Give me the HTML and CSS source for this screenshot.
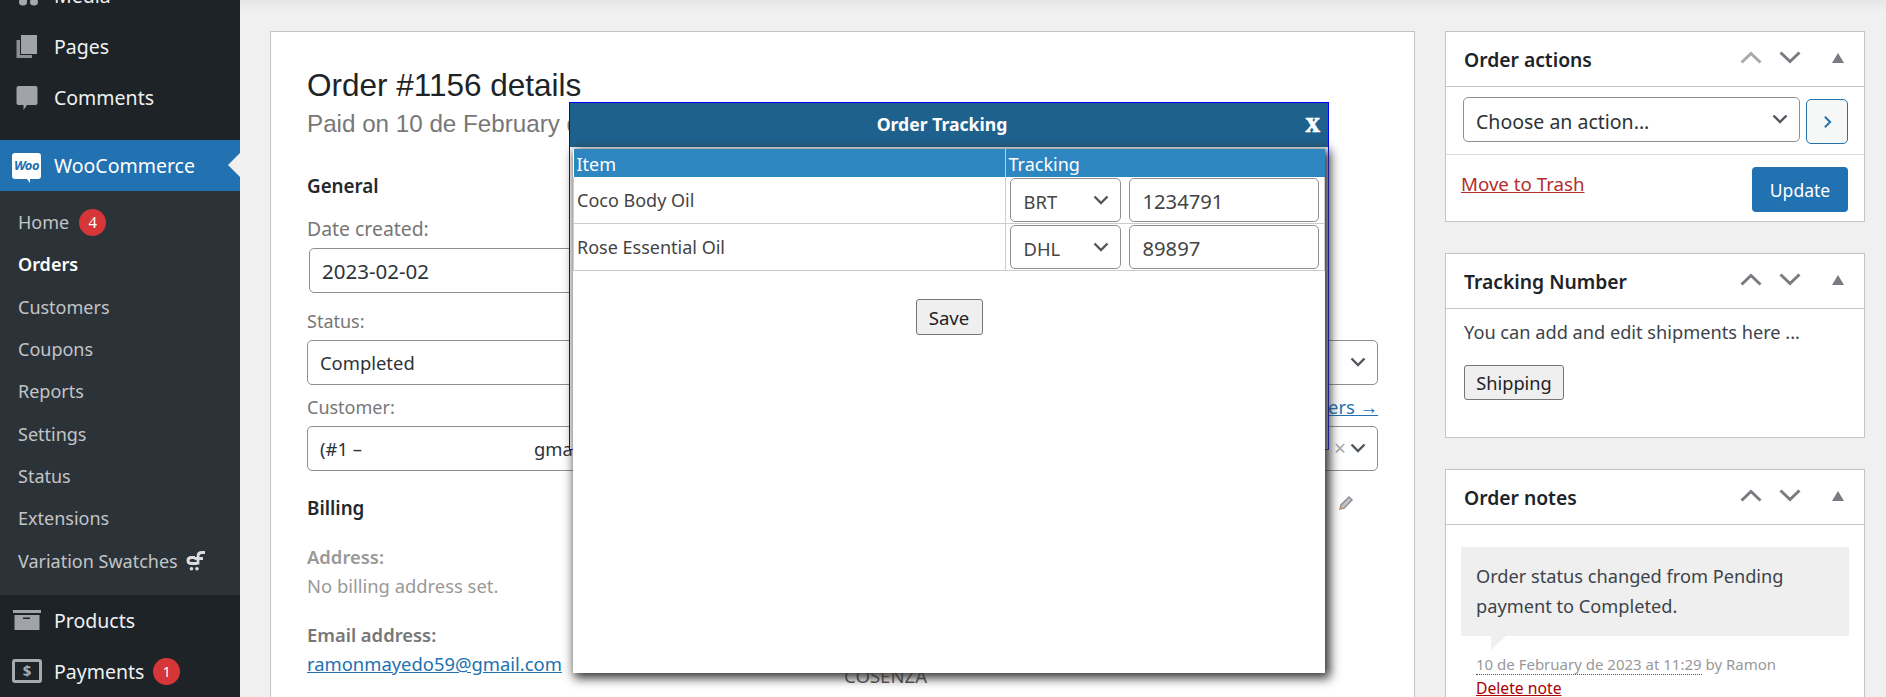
FILE: index.html
```html
<!DOCTYPE html>
<html lang="en">
<head>
    <meta charset="UTF-8">
    <title>Order #1156 details</title>
    <link rel="stylesheet" href="styles.css">
</head>
<body>
    <svg class="sprite" width="0" height="0">
        <symbol id="chev-down" viewBox="0 0 16 10"><path d="M1.5 1.5 8 8l6.5-6.5" fill="none" stroke="currentColor" stroke-width="2.4"/></symbol>
        <symbol id="chev-up" viewBox="0 0 22 13"><path d="M1.5 11.5 11 2.5l9.5 9" fill="none" stroke="currentColor" stroke-width="3"/></symbol>
        <symbol id="chev-low" viewBox="0 0 22 13"><path d="M1.5 1.5 11 10.5l9.5-9" fill="none" stroke="currentColor" stroke-width="3"/></symbol>
        <symbol id="tri-up" viewBox="0 0 12 10"><path d="M6 0 12 10H0z" fill="currentColor"/></symbol>
    </svg>

    <div class="page">
        <nav class="sidebar">
            <ul class="menu">
                <li class="menu-item">
                    <svg class="menu-icon" viewBox="0 0 30 24"><ellipse cx="11" cy="18" rx="4" ry="3.5" fill="#a7aaad"/><ellipse cx="22" cy="18" rx="4" ry="3.5" fill="#a7aaad"/><path d="M13 2h11v15h-2V6h-7v12h-2z" fill="#a7aaad"/></svg>
                    Media
                </li>
                <li class="menu-item">
                    <svg class="menu-icon" viewBox="0 0 30 24"><path d="M4.500 5h3.500v15h12v3H4.500z" fill="#8c8f94"/><path d="M9 0h16v19H9z" fill="#a0a4aa"/></svg>
                    Pages
                </li>
                <li class="menu-item">
                    <svg class="menu-icon" viewBox="0 0 30 24"><path d="M6.500 0h17q2 0 2 2v15q0 2-2 2H15l-3.500 5v-5h-5q-2 0-2-2V2q0-2 2-2z" fill="#a0a4aa"/></svg>
                    Comments
                </li>
                <li class="menu-item is-current">
                    <span class="woo-icon">Woo</span>
                    WooCommerce
                </li>
            </ul>
            <ul class="submenu">
                <li>Home <span class="badge badge-serif">4</span></li>
                <li class="is-active">Orders</li>
                <li>Customers</li>
                <li>Coupons</li>
                <li>Reports</li>
                <li>Settings</li>
                <li>Status</li>
                <li>Extensions</li>
                <li>Variation Swatches
                    <svg class="swatch-icon" viewBox="0 0 20 20"><path d="M9 6.500H5.500q-3.500 0-3.500 3t3.500 3H11" fill="none" stroke="#dcdcde" stroke-width="3"/><path d="M19 1.500H16q-4 0-4 4v8M8.500 7.500H17" fill="none" stroke="#dcdcde" stroke-width="2.800"/><circle cx="5.500" cy="17.800" r="1.800" fill="#dcdcde"/><circle cx="11" cy="17.800" r="1.800" fill="#dcdcde"/></svg>
                </li>
            </ul>
            <ul class="menu">
                <li class="menu-item">
                    <svg class="menu-icon" viewBox="0 0 30 24"><path d="M1 2h28v3H1z" fill="#a0a4aa"/><path d="M2.500 7h25v15h-25z" fill="#a0a4aa"/><path d="M11 9.500h7v1.500h-7z" fill="#1d2327"/></svg>
                    Products
                </li>
                <li class="menu-item">
                    <span class="pay-icon">$</span>
                    Payments <span class="badge">1</span>
                </li>
            </ul>
        </nav>

        <main class="content">
            <section class="order-card">
                <h1>Order #1156 details</h1>
                <p class="order-sub">Paid on 10 de February de 2023</p>

                <h3 class="section-title">General</h3>
                <label class="field-label date-label">Date created:</label>
                <input class="date-input" type="text" value="2023-02-02">

                <label class="field-label status-label">Status:</label>
                <div class="select-wrap">
                    <select class="field-select"><option>Completed</option></select>
                    <svg class="chev"><use href="#chev-down"/></svg>
                </div>

                <div class="customer-row">
                    <label class="field-label">Customer:</label>
                    <a href="#" class="link">View other orders →</a>
                </div>
                <div class="select-wrap">
                    <div class="field-select customer-value"><span>(#1 –</span><span class="customer-mail">gmail.com)</span></div>
                    <span class="clear-x">×</span>
                    <svg class="chev"><use href="#chev-down"/></svg>
                </div>

                <div class="address-cols">
                    <div class="billing-col">
                        <h3 class="section-title billing-title">Billing</h3>
                        <p class="muted"><strong>Address:</strong><br>No billing address set.</p>
                        <p class="email"><strong>Email address:</strong><br><a href="#" class="link">ramonmayedo59@gmail.com</a></p>
                    </div>
                    <div class="shipping-col">
                        <svg class="pencil" viewBox="0 0 16 16"><path d="M2 14l1-4 8-8 3 3-8 8z" fill="#c3c4c7" stroke="#8c8f94" stroke-width="1.500"/><path d="M2 14l1-4 3 3z" fill="#c9a98a"/></svg>
                        <p class="shipping-city">COSENZA</p>
                    </div>
                </div>
            </section>

            <aside class="side-col">
                <section class="metabox">
                    <div class="metabox-head">
                        <h2>Order actions</h2>
                        <div class="head-btns">
                            <svg class="head-chev is-faded"><use href="#chev-up"/></svg>
                            <svg class="head-chev"><use href="#chev-low"/></svg>
                            <svg class="head-tri"><use href="#tri-up"/></svg>
                        </div>
                    </div>
                    <div class="action-row">
                        <div class="select-wrap action-select">
                            <select class="field-select"><option>Choose an action...</option></select>
                            <svg class="chev"><use href="#chev-down"/></svg>
                        </div>
                        <button class="go-btn" type="button">
                            <svg viewBox="0 0 10 16" width="9" height="14"><path d="M2 2l6 6-6 6" fill="none" stroke="#2271b1" stroke-width="2.200"/></svg>
                        </button>
                    </div>
                    <div class="update-row">
                        <a href="#" class="trash-link">Move to Trash</a>
                        <button class="update-btn" type="button">Update</button>
                    </div>
                </section>

                <section class="metabox">
                    <div class="metabox-head">
                        <h2>Tracking Number</h2>
                        <div class="head-btns">
                            <svg class="head-chev"><use href="#chev-up"/></svg>
                            <svg class="head-chev"><use href="#chev-low"/></svg>
                            <svg class="head-tri"><use href="#tri-up"/></svg>
                        </div>
                    </div>
                    <div class="tracking-body">
                        <p>You can add and edit shipments here ...</p>
                        <button class="plain-btn shipping-btn" type="button">Shipping</button>
                    </div>
                </section>

                <section class="metabox">
                    <div class="metabox-head">
                        <h2>Order notes</h2>
                        <div class="head-btns">
                            <svg class="head-chev"><use href="#chev-up"/></svg>
                            <svg class="head-chev"><use href="#chev-low"/></svg>
                            <svg class="head-tri"><use href="#tri-up"/></svg>
                        </div>
                    </div>
                    <div class="notes-body">
                        <div class="note-bubble">Order status changed from Pending payment to Completed.</div>
                        <p class="note-meta"><span class="note-date">10 de February de 2023 at 11:29</span> by Ramon</p>
                        <a href="#" class="note-delete">Delete note</a>
                    </div>
                </section>
            </aside>
        </main>
    </div>

    <div class="modal">
        <div class="modal-head">
            <span>Order Tracking</span>
            <span class="modal-close">x</span>
        </div>
        <div class="modal-body">
            <table class="track-table">
                <thead>
                    <tr><th class="col-item">Item</th><th>Tracking</th></tr>
                </thead>
                <tbody>
                    <tr>
                        <td>Coco Body Oil</td>
                        <td>
                            <div class="track-cell">
                                <div class="select-wrap track-select">
                                    <select class="field-select"><option>BRT</option></select>
                                    <svg class="chev"><use href="#chev-down"/></svg>
                                </div>
                                <input class="track-input" type="text" value="1234791">
                            </div>
                        </td>
                    </tr>
                    <tr>
                        <td>Rose Essential Oil</td>
                        <td>
                            <div class="track-cell">
                                <div class="select-wrap track-select">
                                    <select class="field-select"><option>DHL</option></select>
                                    <svg class="chev"><use href="#chev-down"/></svg>
                                </div>
                                <input class="track-input" type="text" value="89897">
                            </div>
                        </td>
                    </tr>
                </tbody>
            </table>
            <div class="save-row">
                <button class="plain-btn" type="button">Save</button>
            </div>
        </div>
    </div>
</body>
</html>
```

FILE: styles.css
```css
/* Base */
html, body {
    margin: 0;
    height: 697px;
    overflow: hidden;
}
body {
    font-family: "Noto Sans", "Open Sans", sans-serif;
    font-size: 18px;
    color: #3c434a;
    background: linear-gradient(#e6e6e6, #f0f0f0 12px);
}
.sprite {
    position: absolute;
}
ul {
    list-style: none;
    margin: 0;
    padding: 0;
}
p {
    margin: 0;
}
a {
    color: #2271b1;
}
.page {
    display: flex;
    height: 697px;
}

/* Sidebar */
.sidebar {
    width: 240px;
    flex-shrink: 0;
    background: #1d2327;
    color: #f0f0f1;
    overflow: hidden;
}
.sidebar > .menu:first-child {
    margin-top: -30px;
}
.menu-item {
    position: relative;
    display: flex;
    align-items: center;
    height: 51px;
    font-size: 19.500px;
    white-space: nowrap;
}
.menu-item:nth-child(3) {
    margin-bottom: 17px;
}
.menu-icon {
    width: 30px;
    height: 24px;
    margin: 0 12px;
    flex-shrink: 0;
}
.is-current {
    background: #2271b1;
    color: #fff;
}
.is-current::after {
    content: "";
    position: absolute;
    right: 0;
    top: 13px;
    border: 12px solid transparent;
    border-left-width: 0;
    border-right-color: #f0f0f1;
}
.woo-icon {
    box-sizing: border-box;
    position: relative;
    width: 29px;
    height: 26px;
    margin: 0 13px 0 12px;
    background: #fff;
    border-radius: 3px;
    color: #2271b1;
    font-size: 13px;
    font-weight: 700;
    font-style: italic;
    line-height: 25px;
    text-align: center;
    letter-spacing: -0.5px;
}
.woo-icon::after {
    content: "";
    position: absolute;
    left: 15px;
    top: 26px;
    border-top: 4px solid #fff;
    border-left: 3px solid transparent;
}
.pay-icon {
    box-sizing: border-box;
    width: 30px;
    height: 24px;
    margin: 0 12px;
    border: 3px solid #a7aaad;
    border-radius: 3px;
    color: #a7aaad;
    font-size: 15px;
    font-weight: 700;
    line-height: 17px;
    text-align: center;
}
.submenu {
    background: #2c3338;
    padding: 10px 0 13px;
    color: #c3c4c7;
}
.submenu li {
    display: flex;
    align-items: center;
    height: 42.300px;
    padding-left: 18px;
    font-size: 18px;
    white-space: nowrap;
}
.submenu .is-active {
    color: #fff;
    font-weight: 600;
}
.badge {
    display: inline-block;
    width: 27px;
    height: 27px;
    margin-left: 9px;
    border-radius: 50%;
    background: #d63638;
    color: #fff;
    font-size: 14px;
    line-height: 27px;
    text-align: center;
}
.badge-serif {
    margin-left: 10px;
    font-family: "Liberation Serif", serif;
    font-size: 17px;
}
.swatch-icon {
    width: 20px;
    height: 20px;
    margin-left: 8px;
}

/* Order card */
.content {
    flex: 1;
    display: flex;
    gap: 30px;
    padding: 31px 21px 0 30px;
    align-items: flex-start;
}
.order-card {
    box-sizing: border-box;
    width: 1145px;
    height: 720px;
    padding: 31px 36px 0 36px;
    background: #fff;
    border: 1px solid #c3c4c7;
}
h1 {
    margin: 0;
    font-family: "Liberation Sans", Arial, sans-serif;
    font-size: 31.500px;
    font-weight: 400;
    line-height: 44px;
    color: #1d2327;
}
.order-sub {
    font-family: "Liberation Sans", Arial, sans-serif;
    font-size: 24.200px;
    line-height: 34px;
    color: #777;
}
.section-title {
    margin: 32px 0 0;
    font-size: 18.800px;
    font-weight: 600;
    line-height: 26px;
    color: #23282d;
}
.field-label {
    display: block;
    margin-top: 18px;
    line-height: 24px;
    color: #777;
}
.date-label {
    font-size: 19.400px;
}
.date-input {
    box-sizing: border-box;
    display: block;
    width: 340px;
    height: 45px;
    margin: 7px 0 0 2px;
    padding: 0 12px;
    border: 1px solid #8c8f94;
    border-radius: 5px;
    font: inherit;
    font-size: 20.500px;
    color: #2c3338;
}
.status-label {
    margin-top: 16px;
    margin-bottom: 7px;
}
.select-wrap {
    position: relative;
}
.field-select {
    box-sizing: border-box;
    display: block;
    width: 100%;
    height: 45px;
    padding: 0 36px 0 12px;
    appearance: none;
    background: #fff;
    border: 1px solid #8c8f94;
    border-radius: 5px;
    font: inherit;
    font-size: 18.400px;
    color: #2c3338;
}
.chev {
    position: absolute;
    right: 12px;
    top: 17px;
    width: 16px;
    height: 10px;
    color: #50575e;
    pointer-events: none;
}
.customer-row {
    display: flex;
    justify-content: space-between;
    align-items: baseline;
    margin-bottom: 7px;
}
.customer-row .field-label {
    margin-top: 10px;
}
.customer-row .link {
    font-size: 18.400px;
}
.customer-value {
    display: flex;
    align-items: center;
}
.customer-mail {
    margin-left: 172px;
}
.clear-x {
    position: absolute;
    right: 32px;
    top: 10px;
    color: #a7aaad;
    font-size: 21px;
    line-height: 24px;
}
.address-cols {
    display: flex;
}
.billing-col {
    width: 537px;
    font-size: 18.400px;
}
.billing-title {
    margin-top: 24px;
}
.muted {
    margin-top: 21px;
    line-height: 29px;
    color: #999;
}
.muted strong, .email strong {
    font-weight: 600;
}
.email {
    margin-top: 20px;
    line-height: 29px;
    color: #777;
}
.shipping-col {
    position: relative;
    flex: 1;
}
.pencil {
    position: absolute;
    right: 24px;
    top: 24px;
    width: 16px;
    height: 16px;
}
.shipping-city {
    margin-top: 192px;
    font-size: 18.600px;
    color: #555;
}

/* Right column */
.side-col {
    width: 420px;
    flex-shrink: 0;
}
.metabox {
    box-sizing: border-box;
    margin-bottom: 31px;
    background: #fff;
    border: 1px solid #c3c4c7;
}
.metabox-head {
    display: flex;
    align-items: center;
    justify-content: space-between;
    height: 54px;
    padding: 0 20px 0 18px;
    border-bottom: 1px solid #c3c4c7;
}
.metabox-head h2 {
    margin: 0;
    font-size: 19.300px;
    font-weight: 600;
    color: #1d2327;
}
.head-btns {
    display: flex;
    align-items: center;
    margin-bottom: 3px;
}
.head-chev {
    width: 22px;
    height: 13px;
    margin-right: 17px;
    color: #787c82;
}
.head-chev.is-faded {
    color: #a7aaad;
}
.head-tri {
    width: 12px;
    height: 10px;
    margin-left: 14px;
    color: #787c82;
}
.action-row {
    display: flex;
    gap: 6px;
    align-items: flex-start;
    padding: 10px 16px 10px 17px;
    border-bottom: 1px solid #dcdcde;
}
.action-select {
    width: 337px;
}
.action-select .field-select {
    padding-top: 3px;
    font-size: 19.500px;
}
.go-btn {
    display: flex;
    align-items: center;
    justify-content: center;
    width: 42px;
    height: 45px;
    padding: 0;
    margin-top: 2px;
    background: #f6f7f7;
    border: 1px solid #2271b1;
    border-radius: 5px;
}
.update-row {
    display: flex;
    justify-content: space-between;
    align-items: center;
    padding: 12px 16px 9px 15px;
}
.trash-link {
    margin-top: -13px;
    font-size: 18.700px;
    color: #b32d2e;
}
.update-btn {
    width: 96px;
    height: 45px;
    background: #2271b1;
    border: 0;
    border-radius: 4px;
    color: #fff;
    font: inherit;
    font-size: 17.500px;
}
.tracking-body {
    height: 117px;
    padding: 11px 18px 0;
    font-size: 18.200px;
}
.plain-btn {
    background: #efefef;
    border: 1px solid #767676;
    border-radius: 3px;
    color: #1d2327;
    font: inherit;
    padding: 0;
}
.shipping-btn {
    display: block;
    width: 100px;
    height: 35px;
    margin-top: 21px;
}
.notes-body {
    padding: 22px 15px 0;
}
.note-bubble {
    position: relative;
    padding: 15px 15px 15px;
    background: #efefef;
    font-size: 18.200px;
    line-height: 29.500px;
}
.note-bubble::after {
    content: "";
    position: absolute;
    left: 30px;
    top: 100%;
    border-top: 14px solid #efefef;
    border-right: 15px solid transparent;
}
.note-meta {
    margin: 16px 0 0 15px;
    font-size: 15px;
    line-height: 24px;
    color: #999;
}
.note-date {
    border-bottom: 1px dotted #555;
}
.note-delete {
    display: block;
    margin-left: 15px;
    font-size: 15.700px;
    line-height: 24px;
    color: #a00;
}

/* Tracking modal */
.modal {
    position: absolute;
    left: 569px;
    top: 102px;
    box-sizing: border-box;
    width: 760px;
    height: 348px;
    background: #fff;
    border: 1px solid #00f;
}
.modal-head {
    position: relative;
    height: 44px;
    padding-right: 14px;
    background: #1f618d;
    color: #fff;
    font-size: 17.600px;
    font-weight: 700;
    line-height: 43px;
    text-align: center;
}
.modal-close {
    position: absolute;
    right: 8px;
    top: -2px;
    font-family: "Liberation Serif", serif;
    font-size: 29px;
    -webkit-text-stroke: 0.6px #fff;
}
.modal-body {
    position: absolute;
    left: 3px;
    top: 46px;
    width: 752px;
    height: 524px;
    background: #fff;
    box-shadow: 3px 3px 10px 2px #333;
}
.track-table {
    width: 100%;
    border-collapse: collapse;
}
.track-table th {
    height: 27px;
    padding: 1px 3px 0;
    background: #2e86c1;
    color: #fff;
    font-weight: 400;
    line-height: 26px;
    text-align: left;
}
.track-table th + th {
    border-left: 1px solid #ccc;
}
.col-item {
    width: 425px;
}
.track-table td {
    height: 46px;
    padding: 0 3px;
    border: 1px solid #ccc;
    border-top: 0;
    color: #444;
}
.track-cell {
    display: flex;
    gap: 8px;
    padding-left: 1px;
}
.track-select {
    width: 111px;
}
.track-select .field-select {
    height: 44px;
    padding: 2px 36px 0 13px;
    color: #444;
}
.track-input {
    box-sizing: border-box;
    width: 190px;
    height: 44px;
    padding: 2px 13px 0;
    border: 1px solid #8c8f94;
    border-radius: 5px;
    font: inherit;
    font-size: 20.200px;
    color: #444;
}
.save-row {
    display: flex;
    justify-content: center;
    padding-top: 28px;
}
.save-row .plain-btn {
    width: 67px;
    height: 36px;
    font-size: 18.600px;
}
```
